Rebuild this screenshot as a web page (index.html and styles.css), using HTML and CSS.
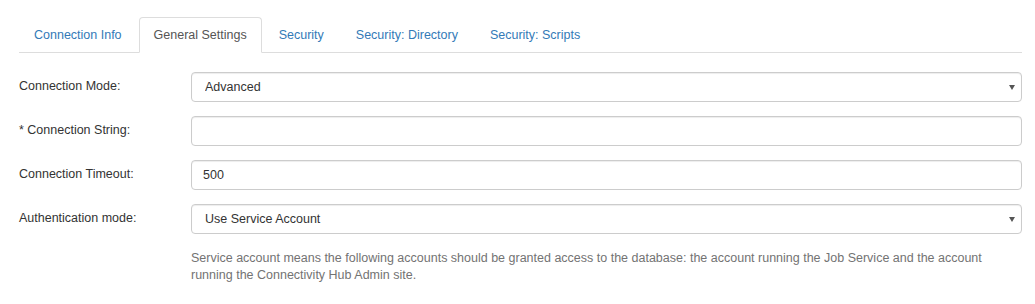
FILE: index.html
```html
<!DOCTYPE html>
<html lang="en">
  <head>
    <meta charset="UTF-8" />
    <title>Connection Settings</title>
    <link rel="stylesheet" href="styles.css">
  </head>
  <body>
    <div class="container">
      <ul class="nav-tabs">
        <li><a href="#">Connection Info</a></li>
        <li class="active"><a href="#">General Settings</a></li>
        <li><a href="#">Security</a></li>
        <li><a href="#">Security: Directory</a></li>
        <li><a href="#">Security: Scripts</a></li>
      </ul>

      <form class="settings-form">
        <div class="form-row">
          <label for="connectionMode">Connection Mode:</label>
          <select id="connectionMode">
            <option>Advanced</option>
            <option>Basic</option>
          </select>
        </div>
        <div class="form-row">
          <label for="connectionString">* Connection String:</label>
          <input type="text" id="connectionString" />
        </div>
        <div class="form-row">
          <label for="connectionTimeout">Connection Timeout:</label>
          <input type="text" id="connectionTimeout" value="500" />
        </div>
        <div class="form-row">
          <label for="authMode">Authentication mode:</label>
          <select id="authMode">
            <option>Use Service Account</option>
            <option>SQL Authentication</option>
          </select>
        </div>
        <p class="help-text">
          Service account means the following accounts should be granted access to the database: the account running the Job Service and the account running the Connectivity Hub Admin site.
        </p>
      </form>
    </div>
  </body>
</html>
```

FILE: styles.css
```css
:root {
  --text: #333333;
  --muted: #737373;
  --link: #337ab7;
  --border: #cccccc;
  --tab-border: #dddddd;
  --radius: 4px;
}

* {
  margin: 0;
  padding: 0;
  box-sizing: border-box;
}

body {
  background: white;
  color: var(--text);
  font-family: "Liberation Sans", Arial, sans-serif;
  font-size: 12.5px;
  line-height: 1.42857;
}

.container {
  padding: 17px 13px 0 19px;
}

.nav-tabs {
  list-style: none;
  display: flex;
  border-bottom: 1px solid var(--tab-border);
}

.nav-tabs li {
  margin-right: 2px;
  margin-bottom: -1px;
}

.nav-tabs a {
  display: block;
  padding: 8px 14px;
  line-height: 18px;
  color: var(--link);
  text-decoration: none;
  border: 1px solid transparent;
  border-radius: var(--radius) var(--radius) 0 0;
}

.nav-tabs .active a {
  color: #555555;
  border-color: var(--tab-border);
  border-bottom-color: white;
  background: white;
}

.settings-form {
  padding-top: 19px;
}

.form-row {
  display: flex;
  align-items: center;
  margin-bottom: 14px;
}

.form-row label {
  width: 172px;
  flex-shrink: 0;
}

input,
select {
  flex: 1;
  height: 30px;
  border: 1px solid var(--border);
  border-radius: var(--radius);
  font-family: inherit;
  font-size: 12.5px;
  color: var(--text);
  background-color: white;
  box-shadow: inset 0 1px 1px rgba(0, 0, 0, 0.075);
}

input {
  padding: 0 11px;
}

select {
  padding: 0 24px 0 13px;
  appearance: none;
  -webkit-appearance: none;
  background-image: url("data:image/svg+xml;charset=UTF-8,%3csvg xmlns='http://www.w3.org/2000/svg' width='6' height='5' viewBox='0 0 6 5'%3e%3cpolygon points='0,0 6,0 3,5' fill='%23555555'/%3e%3c/svg%3e");
  background-repeat: no-repeat;
  background-position: right 6px center;
  background-size: 6px 5px;
}

.help-text {
  margin: 16px 0 0 172px;
  color: var(--muted);
  line-height: 17px;
  padding-right: 20px;
}
```
